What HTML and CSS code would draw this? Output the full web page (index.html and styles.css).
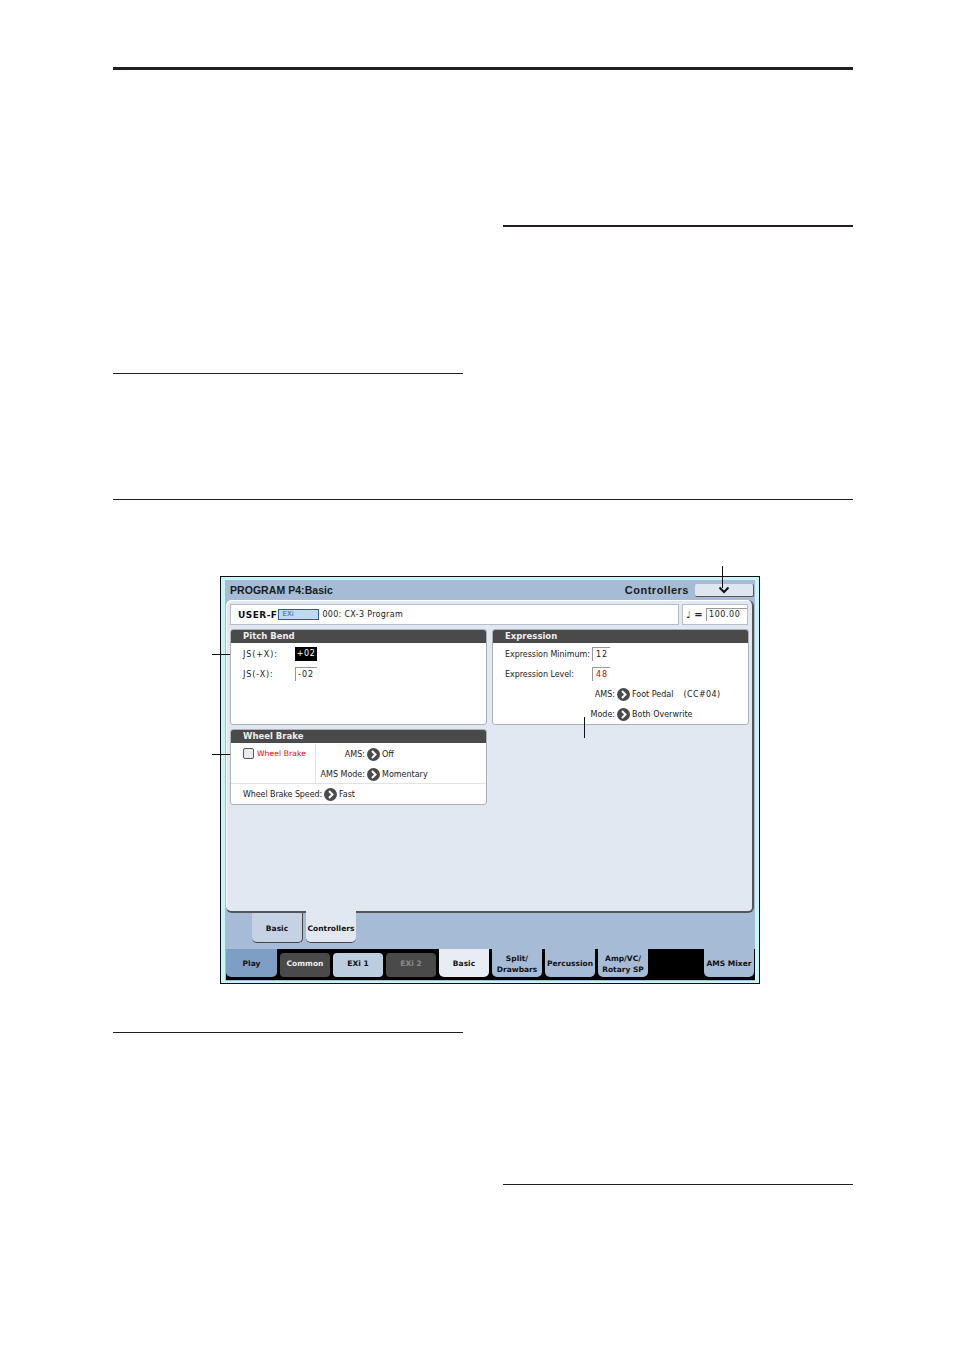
FILE: index.html
```html
<!DOCTYPE html>
<html lang="en">
<head>
<meta charset="utf-8">
<title>PROGRAM P4:Basic</title>
<link rel="stylesheet" href="styles.css">
</head>
<body>
<svg class="defs" width="0" height="0" aria-hidden="true">
  <symbol id="go" viewBox="0 0 13 13">
    <circle cx="6.5" cy="6.5" r="6.5" fill="#4a4a4a"/>
    <path d="M5 3 L8.5 6.5 L5 10" fill="none" stroke="#fff" stroke-width="2"/>
  </symbol>
</svg>
<main class="page">
  <div class="top-rule"></div>
  <section class="cols cols-top">
    <div class="col col-a"><div class="rule"></div></div>
    <div class="col col-b"><div class="rule-med"></div></div>
  </section>
  <div class="rule full-rule"></div>

  <figure class="figure">
    <div class="screen">
      <div class="screen-in">
        <header class="titlebar">
          <span class="title">PROGRAM P4:Basic</span>
          <span class="title-right">Controllers</span>
          <button class="menu-btn"><svg width="12" height="8" viewBox="0 0 12 8"><path d="M1.5 1.5 L6 6 L10.5 1.5" fill="none" stroke="#111" stroke-width="2"/></svg></button>
        </header>
        <div class="panel">
          <div class="info-row">
            <div class="prog-box">
              <b class="bank">USER-F</b>
              <span class="exi">EXi</span>
              <span class="prog-name">000: CX-3 Program</span>
            </div>
            <div class="tempo-box"><span class="note">♩ =</span><span class="tempo-val">100.00</span></div>
          </div>
          <div class="groups">
            <section class="group">
              <h2>Pitch Bend</h2>
              <div class="row"><span class="lbl lbl-js">JS(+X):</span><span class="val val-sel">+02</span></div>
              <div class="row"><span class="lbl lbl-js">JS(-X):</span><span class="val">-02</span></div>
            </section>
            <section class="group">
              <h2>Expression</h2>
              <div class="row"><span class="lbl lbl-ex">Expression Minimum:</span><span class="val val-ex">12</span></div>
              <div class="row"><span class="lbl lbl-ex">Expression Level:</span><span class="val val-ex val-red">48</span></div>
              <div class="row row-ams"><span class="lbl lbl-r">AMS:</span><svg class="go"><use href="#go"/></svg><span>Foot Pedal</span><span class="cc">(CC#04)</span></div>
              <div class="row row-ams"><span class="lbl lbl-r">Mode:</span><svg class="go"><use href="#go"/></svg><span>Both Overwrite</span></div>
            </section>
            <section class="group group-wheel">
              <h2>Wheel Brake</h2>
              <div class="wheel-top">
                <div class="wheel-left"><span class="check"></span><span class="red">Wheel Brake</span></div>
                <div class="wheel-right">
                  <div class="row-w"><span class="lbl-w">AMS:</span><svg class="go"><use href="#go"/></svg><span>Off</span></div>
                  <div class="row-w"><span class="lbl-w">AMS Mode:</span><svg class="go"><use href="#go"/></svg><span>Momentary</span></div>
                </div>
              </div>
              <div class="wheel-bottom"><span>Wheel Brake Speed:</span><svg class="go"><use href="#go"/></svg><span>Fast</span></div>
            </section>
          </div>
        </div>
        <nav class="subtabs">
          <span class="subtab">Basic</span>
          <span class="subtab subtab-on">Controllers</span>
        </nav>
        <nav class="tabs">
          <span class="tab tab-play">Play</span>
          <span class="tab tab-dark">Common</span>
          <span class="tab tab-light">EXi 1</span>
          <span class="tab tab-dark tab-off">EXi 2</span>
          <span class="tab tab-on">Basic</span>
          <span class="tab tab-two">Split/<br>Drawbars</span>
          <span class="tab">Percussion</span>
          <span class="tab tab-two">Amp/VC/<br>Rotary SP</span>
          <span class="tab tab-last">AMS Mixer</span>
        </nav>
      </div>
    </div>
    <i class="callout c-top"></i>
    <i class="callout c-js"></i>
    <i class="callout c-wheel"></i>
    <i class="callout c-mode"></i>
  </figure>

  <section class="cols cols-bottom">
    <div class="col"><div class="rule"></div></div>
    <div class="col col-d"><div class="rule"></div></div>
  </section>
</main>
</body>
</html>
```

FILE: styles.css
```css
* { box-sizing: border-box; }
html, body { margin: 0; padding: 0; background: #fff; }
body { width: 954px; height: 1350px; overflow: hidden; font-family: "DejaVu Sans", sans-serif; font-size: 8px; color: #222; }
.defs { position: absolute; }
.page { padding: 67px 101px 0 113px; width: 954px; }
.top-rule { height: 3px; background: #231f20; }
.cols { display: grid; grid-template-columns: 350px 350px; column-gap: 40px; }
.rule { height: 1px; background: #231f20; }
.rule-med { height: 2px; background: #231f20; }
.cols-top { height: 429px; }
.col-a { padding-top: 303px; }
.col-b { padding-top: 155px; }
.full-rule { width: 740px; }

.figure { position: relative; margin: 76px 0 0 107px; width: 540px; height: 408px; }
.screen { width: 540px; height: 408px; border: 1px solid #111; background: #c8f6f8; padding: 3px 4px 2px 4px; }
.screen-in { height: 100%; background: #a5bbd6; display: flex; flex-direction: column; }

.titlebar { height: 20px; display: flex; align-items: center; padding: 0 1px 0 5px; flex: none; }
.title { font-family: "Liberation Sans", sans-serif; font-size: 10.5px; font-weight: bold; letter-spacing: .05px; color: #1a1a1a; }
.title-right { margin-left: auto; font-family: "Liberation Sans", sans-serif; font-size: 11px; font-weight: bold; letter-spacing: .5px; color: #1a1a1a; }
.menu-btn { margin: 0 0 0 6px; padding: 0; width: 59px; height: 13px; display: flex; align-items: center; justify-content: center; background: #dfe6f0; border: 0; border-right: 1px solid #555; border-bottom: 1px solid #555; border-radius: 2px; }

.panel { width: 528px; height: 313px; margin-left: 1px; flex: none; background: #e1e8f1; border-radius: 6px; border-right: 2px solid #555; border-bottom: 2px solid #555; padding: 4px 4px 0 4px; box-shadow: inset 1px 1px 0 #fff; }
.info-row { display: flex; gap: 3px; height: 21px; }
.prog-box { width: 450px; background: #fff; border: 1px solid #b9bdc4; display: flex; align-items: center; padding-left: 7px; }
.bank { font-size: 9px; letter-spacing: .45px; color: #111; }
.exi { width: 41px; height: 11px; margin: 0 3px 0 1px; background: #c2d8f2; border: 1px solid #2a5ca8; color: #2a5ca8; line-height: 9px; padding-left: 3px; font-size: 7px; }
.prog-name { letter-spacing: .3px; }
.tempo-box { width: 66px; background: #fff; border: 1px solid #b9bdc4; display: flex; align-items: center; padding-left: 3px; gap: 5px; }
.note { font-size: 10px; font-weight: bold; width: 15px; white-space: nowrap; }
.tempo-val { width: 41px; height: 13px; border-top: 1px solid #999; border-left: 1px solid #999; line-height: 12px; padding-left: 2px; letter-spacing: .55px; }

.groups { display: grid; grid-template-columns: 257px 257px; column-gap: 5px; grid-template-rows: 96px 76px; row-gap: 4px; margin-top: 4px; }
.group { background: #fff; border: 1px solid #aeb2b8; border-radius: 3px; overflow: hidden; }
.group h2 { margin: 0 -1px 1px; height: 13px; background: #4a4a4a; color: #eee; font-size: 8.5px; font-weight: bold; line-height: 12px; padding-left: 13px; letter-spacing: 0; }
.row { height: 20px; display: flex; align-items: center; padding-left: 12px; white-space: nowrap; }
.lbl-js { width: 52px; letter-spacing: .9px; }
.lbl-ex { width: 87px; letter-spacing: -.05px; }
.val { width: 22px; height: 14px; border-top: 1px solid #999; border-left: 1px solid #999; line-height: 13px; padding-left: 2px; letter-spacing: 1px; }
.val-ex { width: 18px; padding-left: 3px; }
.val-sel { background: #000; color: #fff; border: 0; text-align: center; letter-spacing: .6px; padding-left: 0; }
.val-red { color: #e00000; }
.row-ams { padding-left: 0; }
.row-ams .lbl-r { width: 122px; text-align: right; }
.go { width: 13px; height: 13px; margin: 0 2px 0 2px; flex: none; }
.cc { margin-left: 10px; letter-spacing: .4px; }

.group-wheel { grid-column: 1; grid-row: 2; }
.wheel-top { display: flex; height: 40px; border-bottom: 1px solid #e3e3e3; }
.wheel-left { width: 85px; border-right: 1px solid #e3e3e3; display: flex; align-items: flex-start; padding: 4px 0 0 12px; gap: 3px; color: #e00000; white-space: nowrap; letter-spacing: .1px; }
.red { font-size: 7.6px; line-height: 11px; }
.check { width: 11px; height: 11px; flex: none; border: 1px solid #555; border-radius: 2px; background: #e8ecf2; }
.wheel-right { flex: 1; }
.row-w { height: 20px; display: flex; align-items: center; white-space: nowrap; }
.lbl-w { width: 49px; text-align: right; }
.wheel-bottom { height: 20px; display: flex; align-items: center; padding-left: 12px; white-space: nowrap; letter-spacing: -.1px; }

.subtabs { display: flex; gap: 3px; padding-left: 27px; flex: none; height: 36px; }
.subtab { width: 51px; height: 30px; background: #c4d2e4; border-radius: 0 0 5px 5px; border-right: 1px solid #444; border-bottom: 1px solid #444; font-size: 7.5px; font-weight: bold; color: #111; text-align: center; padding-top: 11px; }
.subtab-on { width: 50px; background: #e1e8f1; margin-top: -2px; height: 32px; padding-top: 13px; white-space: nowrap; border-right: 0; }

.tabs { flex: none; height: 31px; margin-left: 1px; background: #000; display: flex; gap: 3px; }
.tab { width: 50px; height: 28px; background: #a5bbd6; border-radius: 0 0 5px 5px; font-size: 7.5px; font-weight: bold; color: #111; text-align: center; display: flex; align-items: center; justify-content: center; line-height: 11px; white-space: nowrap; }
.tab-two { padding-top: 2px; }
.tab-play { width: 51px; background: #7e9fc3; }
.tab-dark { background: #4a4a4a; color: #eee; margin-top: 4px; height: 24px; border-radius: 4px; padding-bottom: 4px; }
.tab-off { color: #8a8a8a; }
.tab-light { background: #bccde0; color: #111; margin-top: 4px; height: 24px; border-radius: 4px; padding-bottom: 4px; }
.tab-on { background: #e8edf4; }
.tab-last { margin-left: auto; margin-right: 1px; }

.callout { position: absolute; background: #111; display: block; }
.c-top { left: 502px; top: -10px; width: 1px; height: 22px; }
.c-js { left: -8px; top: 78px; width: 18px; height: 1px; }
.c-wheel { left: -8px; top: 178px; width: 18px; height: 1px; }
.c-mode { left: 364px; top: 141px; width: 1px; height: 21px; }

.cols-bottom { height: 153px; margin-top: 48px; }
.col-d { padding-top: 152px; }
```
